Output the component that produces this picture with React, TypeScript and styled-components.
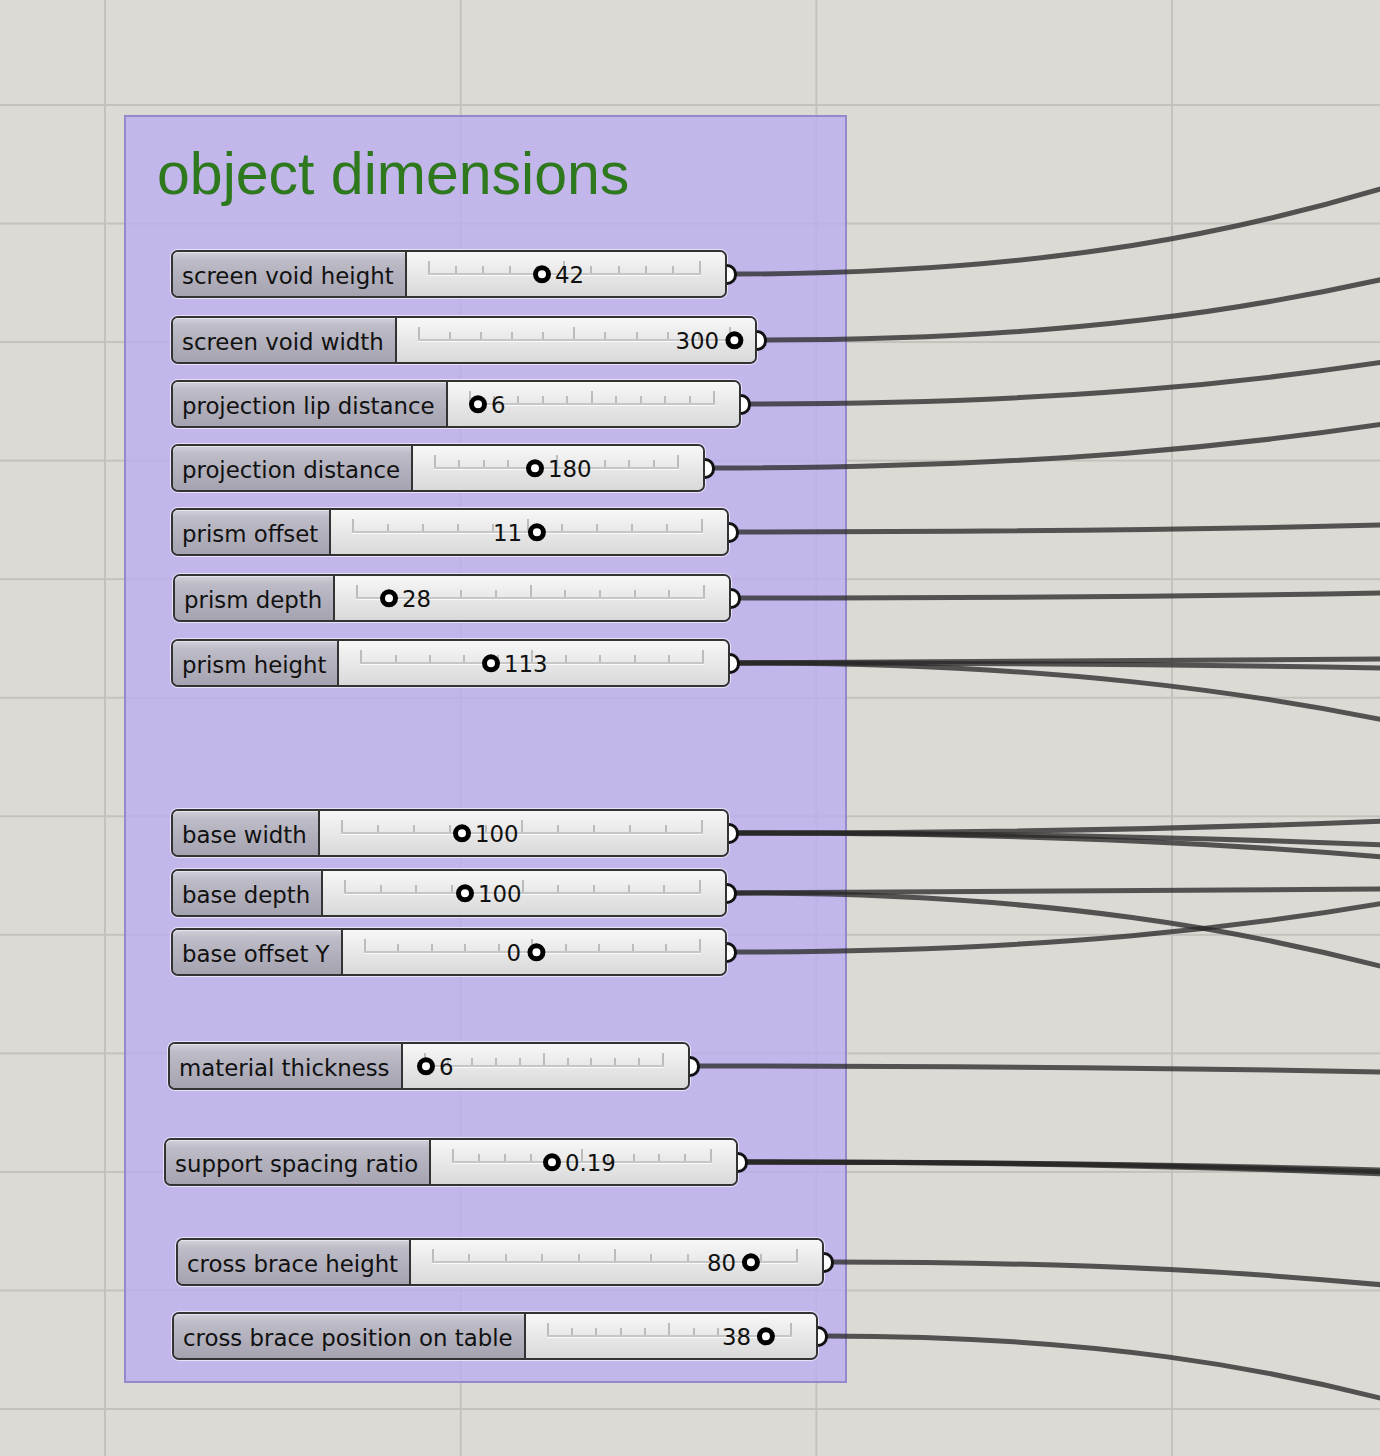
import React from 'react'
import styled, { createGlobalStyle } from 'styled-components'

const GlobalStyle = createGlobalStyle`
    html, body {
        margin: 0;
        padding: 0;
        background: #dcdad5;
    }
`

const Canvas = styled.div`
    position: relative;
    width: 1380px;
    height: 1456px;
    overflow: hidden;
    background-color: #dcdad5;
    background-image:
        linear-gradient(to right, #c4c2bc 2px, transparent 2px),
        linear-gradient(to bottom, #c4c2bc 2px, transparent 2px);
    background-size: 355.7px 100%, 100% 118.55px;
    background-position: 104px 0, 0 104px;
`

const Group = styled.div`
    position: absolute;
    left: 124px;
    top: 115px;
    width: 723px;
    height: 1268px;
    box-sizing: border-box;
    padding: 24px 0 0 31px;
    background: rgba(188, 172, 240, 0.8);
    border: 2px solid rgba(140, 125, 195, 0.8);
    z-index: 0;
`

const GroupTitle = styled.div`
    font-family: "Liberation Sans", Arial, sans-serif;
    font-size: 59px;
    line-height: 1.15;
    color: #2e781e;
`

const Wires = styled.svg`
    position: absolute;
    left: 0;
    top: 0;
    z-index: 1;
    pointer-events: none;
`

const Node = styled.div<{ $x: number; $y: number; $w: number }>`
    position: absolute;
    left: ${p => p.$x}px;
    top: ${p => p.$y}px;
    width: ${p => p.$w}px;
    height: 48px;
    box-sizing: border-box;
    display: flex;
    border: 2px solid #333;
    border-radius: 7px;
    box-shadow: 0 0 0 1px rgba(255, 255, 255, 0.6);
    font-family: "DejaVu Sans", "Liberation Sans", sans-serif;
    font-size: 22.85px;
    color: #111;
    z-index: 2;
`

const Label = styled.div`
    display: flex;
    align-items: center;
    padding: 3px 11px 0 9px;
    white-space: nowrap;
    background: linear-gradient(to bottom, #d2d0da 0%, #bdbcc7 18%, #b1b0bc 55%, #a4a3af 100%);
    border-right: 2px solid #333;
    border-radius: 5px 0 0 5px;
    box-shadow: inset 0 1px 0 rgba(255, 255, 255, 0.45);
`

const Body = styled.div`
    flex: 1;
    display: flex;
    align-items: flex-start;
    padding: 9px 24px 0 21px;
    background: linear-gradient(to bottom, #f7f7f7 0%, #ebebeb 40%, #d9d9d9 100%);
    border-radius: 0 5px 5px 0;
`

const Rail = styled.div`
    flex: 1;
    height: 14px;
    box-sizing: border-box;
    display: flex;
    justify-content: space-between;
    align-items: flex-end;
    border-bottom: 2px solid #c6c6c6;
    box-shadow: 0 1px 0 rgba(255, 255, 255, 0.8);
`

const Tick = styled.span<{ $major: boolean }>`
    width: 2px;
    height: ${p => (p.$major ? 12 : 7)}px;
    background: #bcbcbc;
`

const Thumb = styled.div<{ $left: number; $flip: boolean }>`
    position: absolute;
    left: ${p => p.$left}px;
    top: 22px;
    display: flex;
    align-items: center;
    flex-direction: ${p => (p.$flip ? 'row-reverse' : 'row')};
    gap: ${p => (p.$flip ? 6 : 4)}px;
    transform: translate(${p => (p.$flip ? 'calc(-100% + 9px)' : '-9px')}, -50%);
`

const Knob = styled.span`
    width: 18px;
    height: 18px;
    box-sizing: border-box;
    border-radius: 50%;
    border: 5px solid #000;
    background: #fff;
`

const Value = styled.span`
    line-height: 1.15;
    padding-top: 3px;
    white-space: nowrap;
`

const Port = styled.span`
    position: absolute;
    right: -12px;
    top: 50%;
    width: 10px;
    height: 21px;
    margin-top: -10.5px;
    box-sizing: border-box;
    border: 3.5px solid #111;
    border-left: 0;
    border-radius: 0 11px 11px 0;
    background: #fff;
`

type SliderData = {
    label: string
    x: number
    y: number
    w: number
    knob: number
    value: string
    flip?: boolean
    wires: number[]
}

const sliders: SliderData[] = [
    { label: 'screen void height', x: 171, y: 250, w: 556, knob: 542, value: '42', wires: [188] },
    { label: 'screen void width', x: 171, y: 316, w: 586, knob: 734, value: '300', flip: true, wires: [279] },
    { label: 'projection lip distance', x: 171, y: 380, w: 570, knob: 478, value: '6', wires: [362] },
    { label: 'projection distance', x: 171, y: 444, w: 534, knob: 535, value: '180', wires: [424] },
    { label: 'prism offset', x: 171, y: 508, w: 558, knob: 537, value: '11', flip: true, wires: [525] },
    { label: 'prism depth', x: 173, y: 574, w: 558, knob: 389, value: '28', wires: [593] },
    { label: 'prism height', x: 171, y: 639, w: 559, knob: 491, value: '113', wires: [659, 668, 720] },
    { label: 'base width', x: 171, y: 809, w: 558, knob: 462, value: '100', wires: [821, 845, 857] },
    { label: 'base depth', x: 171, y: 869, w: 556, knob: 465, value: '100', wires: [889, 967] },
    { label: 'base offset Y', x: 171, y: 928, w: 556, knob: 536, value: '0', flip: true, wires: [903] },
    { label: 'material thickness', x: 168, y: 1042, w: 522, knob: 426, value: '6', wires: [1072] },
    { label: 'support spacing ratio', x: 164, y: 1138, w: 574, knob: 552, value: '0.19', wires: [1170, 1172, 1174] },
    { label: 'cross brace height', x: 176, y: 1238, w: 648, knob: 751, value: '80', flip: true, wires: [1285] },
    { label: 'cross brace position on table', x: 172, y: 1312, w: 646, knob: 766, value: '38', flip: true, wires: [1399] },
]

const WIDTH = 1380
const HEIGHT = 1456

// bezier from output port to the right edge of the view
function wirePath(x0: number, y0: number, y1: number) {
    const x1 = WIDTH + 4
    const len = x1 - x0
    const c1x = x0 + len * 0.5
    const c2x = x0 + len * 0.8
    const c2y = y0 + (y1 - y0) * 0.55
    return `M${x0} ${y0} C${c1x} ${y0} ${c2x} ${c2y} ${x1} ${y1}`
}

function Slider(props: { data: SliderData }) {
    const s = props.data
    return (
        <Node $x={s.x} $y={s.y} $w={s.w}>
            <Label>{s.label}</Label>
            <Body>
                <Rail>
                    {Array.from({ length: 11 }).map((_, i) => (
                        <Tick key={i} $major={i === 0 || i === 5 || i === 10} />
                    ))}
                </Rail>
            </Body>
            <Thumb $left={s.knob - s.x - 2} $flip={!!s.flip}>
                <Knob />
                <Value>{s.value}</Value>
            </Thumb>
            <Port />
        </Node>
    )
}

const App = () => {
    return (
        <Canvas>
            <GlobalStyle />
            <Group>
                <GroupTitle>object dimensions</GroupTitle>
            </Group>
            <Wires width={WIDTH} height={HEIGHT} viewBox={`0 0 ${WIDTH} ${HEIGHT}`}>
                {sliders.map(s =>
                    s.wires.map((end, i) => (
                        <path
                            key={s.label + i}
                            d={wirePath(s.x + s.w + 7, s.y + 24, end)}
                            fill="none"
                            stroke="rgba(40, 40, 38, 0.76)"
                            strokeWidth={5}
                        />
                    ))
                )}
            </Wires>
            {sliders.map(s => (
                <Slider key={s.label} data={s} />
            ))}
        </Canvas>
    )
}

export default App
